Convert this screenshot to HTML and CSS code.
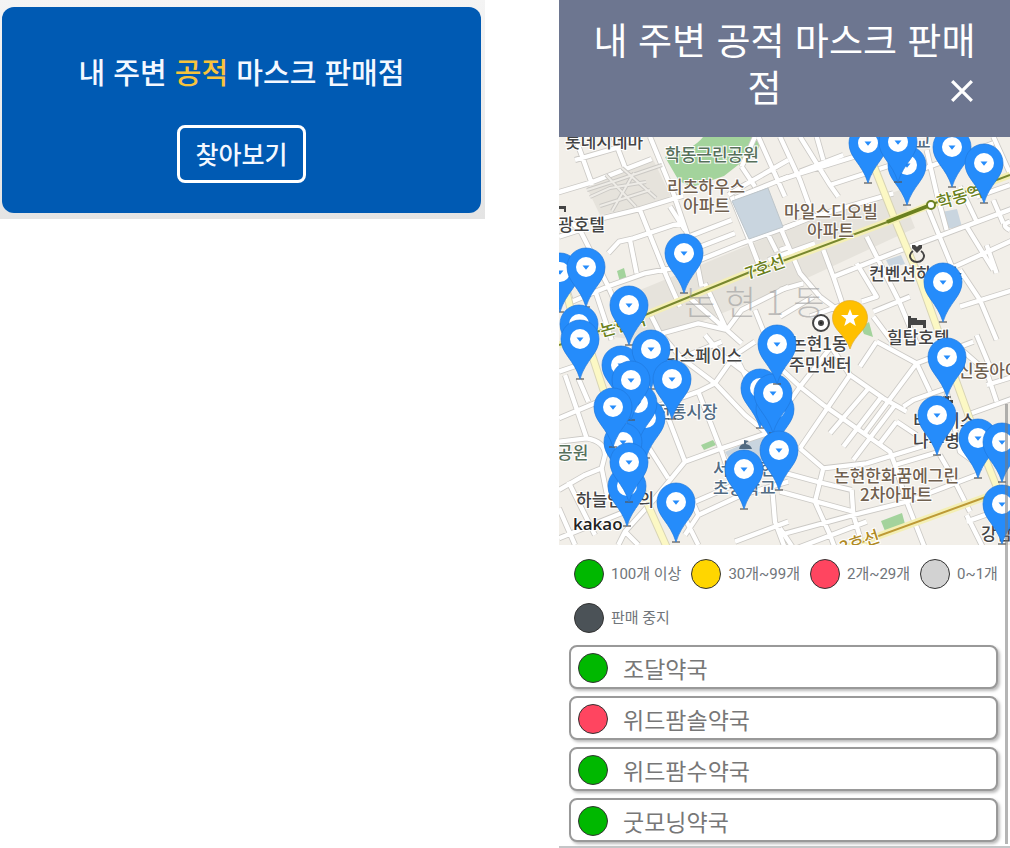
FILE: index.html
```html
<!DOCTYPE html>
<html lang="ko">
<head>
<meta charset="utf-8">
<title>내 주변 공적 마스크 판매점</title>
<link rel="stylesheet" href="styles.css">
</head>
<body>
<main class="page">
  <section class="banner">
    <div class="banner-card">
      <h2 class="banner-title">내 주변 <em class="accent">공적</em> 마스크 판매점</h2>
      <button class="find" type="button">찾아보기</button>
    </div>
  </section>

  <section class="panel">
    <header class="panel-head">
      <h1 class="panel-title">내 주변 공적 마스크 판매점<button class="close" type="button" aria-label="닫기"><svg class="close-icon" viewBox="0 0 22 22"><path d="M2 2L20 20M20 2L2 20"/></svg></button></h1>
    </header>

    <svg class="map" viewBox="559 137 451 408" preserveAspectRatio="xMidYMid slice" role="img" aria-label="논현1동 지도">
      <defs>
        <g id="roads">
          <g transform="translate(555 130) scale(.3333)">
            <path d="M60 20L112 165M175 20L210 112M0 190L110 157L290 87M285 20L355 190L425 395L440 470M60 90L180 55L240 20M100 275L255 237L385 197M160 370L192 335L235 325L355 285L390 280M40 270L75 300L160 470L225 620M255 240L295 340L335 440L375 530M50 515L170 465L270 430L390 408L560 340L720 282M225 330L245 430M345 230L390 300M400 320L530 270M410 360L540 310M530 200L585 335L610 400M540 205L700 140M520 195L560 170L700 90M560 110L600 20M560 110L600 170M610 20L690 200M640 315L665 365M640 390L780 340M515 600L400 500M515 600L560 540L700 470M515 600L560 640M250 630L430 580L515 600M290 560L330 640M450 460L515 600M600 540L640 640M120 480L170 630M12 320L75 300M12 400L50 520"/>
          </g>
          <g transform="translate(780 130) scale(.3333)">
            <path d="M0 150L60 130L240 75M0 20L60 150L100 260M60 20L150 165L175 200M150 165L335 105M60 125L190 75M110 20L130 90M0 300L100 260L340 190M0 290L60 430L120 500L200 560M0 360L30 350M130 360L160 440L190 530M260 320L360 520L410 640M160 440L350 365L460 325L700 235M0 480L70 460M440 60L470 190L500 300M440 225L520 420M560 290L640 420M480 430L700 330M620 345L650 430M540 530L700 480M600 510L650 630M540 420L600 510M0 560L100 500M90 560L200 520M230 400L290 500L245 515M280 545L390 500M280 560L340 640M540 170L590 275M590 200L690 165M640 20L690 130M420 120L640 40M640 210L670 280M690 275Q660 285 690 300"/>
          </g>
          <g transform="translate(555 335) scale(.3333)">
            <path d="M12 110L70 90M12 250L130 200M30 120L95 310M70 130L100 200M12 320L95 310Q150 320 150 360L140 400L90 420L12 465M40 440L120 600M12 520L60 630M140 400L160 500M320 0L380 70L480 145L540 60L600 20M290 220L430 170L480 145L570 240L630 290M430 170L500 350L540 470M340 250L390 380M390 380L500 340L680 280M390 380L300 490L210 590L190 630M270 320L340 430M390 600L430 540L560 480L700 440M540 620L700 560M380 530L430 630M420 500L560 440M650 440L660 560L690 640M12 610L210 530M450 0L500 60L580 120M540 60L600 180M400 60L500 20M210 590L250 630M430 540L400 470"/>
          </g>
          <g transform="translate(780 335) scale(.3333)">
            <path d="M-20 80L60 155L130 210L330 350L345 390M0 240L60 155L150 40M150 30L210 120L310 190L380 230M210 120L60 340M270 155L150 295M305 185L190 335M345 210L220 375M410 85L250 300M290 20L410 85L450 170M410 85L580 20M370 215L400 195L500 160M350 260L410 300M350 260L300 325M240 95L290 20M60 340L130 400L260 385L440 330M130 400L105 500L150 600L165 640M0 410L110 440L215 465M0 470L110 500L220 530M0 600L220 540L380 500L590 420M215 465L220 540L250 640M345 390L480 350M480 360L520 430L570 530M560 240L700 190M540 40L620 110L650 200M620 150L700 125M590 0L640 120M380 500L435 640M345 390L380 500M560 540L610 640M0 580L40 640M50 640L260 560M560 560L700 510M500 170L540 350L610 400"/>
          </g>
        </g>
        <g id="pin">
          <path d="M-4 40H4" stroke="#555" stroke-opacity=".6" stroke-width="2"/>
          <path d="M-19 0A19 19 0 0 1 19 0C19 15 6 20 0 40C-6 20-19 15-19 0Z" fill="#258cfb" stroke="#1f78dd" stroke-width=".7"/>
          <circle r="10" fill="#fff"/>
          <path d="M-3.5-1.5H3.5L0 2.8Z" fill="#258cfb"/>
        </g>
      </defs>

      <path d="M559 137H1010V545H559Z" fill="#f2efe9"/>
      <g fill="#e6e3dc">
        <path d="M587 188L652 157L672 199L600 215Z"/>
        <path d="M640 290L780 232L900 190L915 228L790 286L650 342L600 335Z"/>
      </g>
      <g fill="#a3d39c">
        <path d="M665 157Q693 150 703 137H754Q765 147 752 154L724 176L692 187L679 181Z"/>
        <path d="M617 271L624 268L627 280L620 282Z"/>
        <path d="M701 445L713 440L716 445L704 450Z"/>
        <path d="M881 521L902 513L905 524L885 531Z"/>
        <path d="M861 327L869 322L873 337L864 334Z"/>
      </g>
      <g fill="#c9d5df">
        <path d="M725 452L770 432L779 455L735 470Z"/>
        <path d="M942 212L957 209L962 227L944 229Z"/>
        <path d="M886 260L901 255L905 264L890 268Z"/>
      </g>
      <g fill="none" stroke-linejoin="round">
        <use href="#roads" stroke="#cbc9c5" stroke-width="18"/>
        <use href="#roads" stroke="#fff" stroke-width="13"/>
        <g stroke="#cbc9c5" stroke-width="4">
          <path id="lanes" d="M587 190L618 180L662 165M600 206L650 190M606 175L636 207M622 168L656 198M612 211L634 173M590 197L610 188L646 182"/>
        </g>
        <use href="#lanes" stroke="#eeece7" stroke-width="2"/>
        <path d="M868 151L895 220L920 280L945 350L972 425L1002 500M566 290L572 315L592 355L610 410L648 505L668 550" stroke="#d8d4b5" stroke-width="8"/>
        <path d="M868 151L895 220L920 280L945 350L972 425L1002 500M566 290L572 315L592 355L610 410L648 505L668 550" stroke="#fcf8c4" stroke-width="6"/>
        <path d="M559 345L645 315L750 272L780 262L890 221L930 205L1010 175M840 550L983 498L1010 488" stroke="#f4efb4" stroke-width="7"/>
        <path d="M559 345L645 315L750 272L780 262L890 221L930 205L1010 175" stroke="#78882f" stroke-width="2"/>
        <path d="M887 222L928 206" stroke="#6b8120" stroke-width="4"/>
        <path d="M840 550L983 498L1010 488" stroke="#bd9a36" stroke-width="2"/>
        <circle cx="931" cy="205" r="4" fill="#fff" stroke="#6b8120" stroke-width="2"/>
      </g>
      <path d="M732 201L768 188L783 227L749 239Z" fill="#c9d5df" stroke="#bdc5ca"/>

      <text class="district" x="684" y="315">논 현 1 동</text>

      <g class="place">
        <text x="565" y="148">롯데시네마</text>
        <text x="558" y="231">광호텔</text>
        <text x="869" y="280">컨벤션하우스</text>
        <text x="887" y="344">힐탑호텔</text>
        <text x="664" y="362">디스페이스</text>
        <text x="791" y="350">논현1동</text>
        <text x="789" y="371">주민센터</text>
        <text x="913" y="427">비너이스</text>
        <text x="913" y="447">나누병</text>
        <text x="576" y="506">하늘안과의</text>
        <text x="981" y="540">강남</text>
      </g>
      <g class="place brown">
        <text x="667" y="193">리츠하우스</text>
        <text x="683" y="212">아파트</text>
        <text x="784" y="218">마일스디오빌</text>
        <text x="807" y="237">아파트</text>
        <text x="958" y="377">신동아아</text>
        <text x="834" y="482">논현한화꿈에그린</text>
        <text x="860" y="501">2차아파트</text>
      </g>
      <g class="place green">
        <text x="665" y="161">학동근린공원</text>
        <text x="557" y="459">공원</text>
      </g>
      <g class="place slate">
        <text x="655" y="418">전통시장</text>
        <text x="713" y="475">서울논현</text>
        <text x="713" y="494">초등학교</text>
        <text x="915" y="148">교</text>
      </g>
      <g class="place line">
        <text transform="translate(748 280) rotate(-20)">7호선</text>
        <text transform="translate(939 209) rotate(-16)">학동역</text>
        <text transform="translate(602 337) rotate(-16)">논현역</text>
        <text class="gold" transform="translate(842 554) rotate(-18)">3호선</text>
      </g>

      <g fill="none" stroke="#444">
        <circle cx="821" cy="323" r="8" stroke-width="2" fill="#fff"/>
        <circle cx="821" cy="323" r="2" fill="#222" stroke-width="2"/>
        <path d="M913 251A7 6 0 1 0 921 251" stroke-width="2"/>
      </g>
      <g fill="#444">
        <path d="M917 253L912 248V245L915 245L917 247L919 245L922 245V248Z"/>
        <path d="M908 316H911V318H917V320H926V328H923V325H911V328H908Z"/>
        <path d="M559 206H566V212H564V209H559Z"/>
        <path d="M739 449Q740 444 744 444V440L749 441L746 443V444Q751 445 752 449Z" fill="#526b82"/>
        <path d="M941 400H945V396H949V400H953V403H941Z"/>
      </g>

      <use href="#pin" x="868" y="143"/>
      <use href="#pin" x="907" y="165"/>
      <use href="#pin" x="898" y="142"/>
      <use href="#pin" x="952" y="147"/>
      <use href="#pin" x="984" y="163"/>
      <use href="#pin" x="684" y="253"/>
      <use href="#pin" x="560" y="272"/>
      <use href="#pin" x="586" y="267"/>
      <use href="#pin" x="943" y="282"/>
      <use href="#pin" x="629" y="305"/>
      <use href="#pin" x="579" y="324"/>
      <use href="#pin" x="580" y="339"/>
      <use href="#pin" x="621" y="365"/>
      <use href="#pin" x="651" y="349"/>
      <use href="#pin" x="646" y="418"/>
      <use href="#pin" x="638" y="403"/>
      <use href="#pin" x="631" y="380"/>
      <use href="#pin" x="672" y="379"/>
      <use href="#pin" x="623" y="442"/>
      <use href="#pin" x="613" y="407"/>
      <use href="#pin" x="627" y="486"/>
      <use href="#pin" x="629" y="462"/>
      <use href="#pin" x="676" y="502"/>
      <use href="#pin" x="744" y="469"/>
      <use href="#pin" x="760" y="388"/>
      <use href="#pin" x="775" y="409"/>
      <use href="#pin" x="773" y="393"/>
      <use href="#pin" x="777" y="344"/>
      <use href="#pin" x="779" y="450"/>
      <use href="#pin" x="947" y="357"/>
      <use href="#pin" x="937" y="415"/>
      <use href="#pin" x="978" y="438"/>
      <use href="#pin" x="1002" y="442"/>
      <use href="#pin" x="1002" y="504"/>
      <g transform="translate(850 318)">
        <path d="M-17.5 0A17.5 17.5 0 0 1 17.5 0C17.5 12 5 16 0 31C-5 16-17.5 12-17.5 0Z" fill="#ffc000" stroke="#e0a92c" stroke-width=".7"/>
        <path d="M0-9L2.4-3H9L3.8 1.3L5.8 8L0 4.2L-5.8 8L-3.8 1.3L-9-3H-2.4Z" fill="#fff"/>
      </g>
      <text class="kakao" x="573" y="530">kakao</text>
    </svg>

    <ul class="legend">
      <li class="key"><span class="dot plenty"></span>100개 이상</li>
      <li class="key"><span class="dot some"></span>30개~99개</li>
      <li class="key"><span class="dot few"></span>2개~29개</li>
      <li class="key"><span class="dot none"></span>0~1개</li>
      <li class="key"><span class="dot closed"></span>판매 중지</li>
    </ul>

    <ul class="stores">
      <li><button class="store" type="button"><span class="dot plenty"></span>조달약국</button></li>
      <li><button class="store" type="button"><span class="dot few"></span>위드팜솔약국</button></li>
      <li><button class="store" type="button"><span class="dot plenty"></span>위드팜수약국</button></li>
      <li><button class="store" type="button"><span class="dot plenty"></span>굿모닝약국</button></li>
    </ul>
    <span class="scrollbar"></span>
  </section>
</main>
</body>
</html>
```
FILE: styles.css
```css
* {
  box-sizing: border-box;
}

body {
  margin: 0;
  background: #fff;
  font-family: "Noto Sans CJK KR", sans-serif;
}

button {
  font-family: inherit;
  cursor: pointer;
}

.page {
  display: grid;
  grid-template-columns: 485fr 451fr;
  column-gap: 74px;
  align-items: start;
}

.banner {
  padding: 7px 4px 6px 2px;
  background: linear-gradient(#f4f4f4, #e4e4e4);
}

.banner-card {
  display: flex;
  flex-direction: column;
  align-items: center;
  gap: 32px;
  padding: 42px 16px 30px;
  border-radius: 12px;
  background: #005ab3;
  color: #f4f8ff;
}

.banner-title {
  margin: 0;
  font-size: 29px;
  font-weight: 500;
  line-height: 44px;
}

.accent {
  color: #f7c33c;
  font-style: normal;
}

.find {
  padding: 7px 15px 9px;
  border: 3px solid #fff;
  border-radius: 8px;
  background: transparent;
  color: #f4f8ff;
  font-size: 25px;
  font-weight: 500;
  line-height: 36px;
}

.panel {
  position: relative;
  border-bottom: 2px solid #c4c6c8;
}

.panel-head {
  padding: 16px 28px 27px;
  background: #6d7690;
}

.panel-title {
  margin: 0;
  color: #fff;
  font-size: 37px;
  font-weight: 400;
  line-height: 47px;
  text-align: center;
}

.close {
  float: right;
  display: flex;
  align-items: center;
  justify-content: center;
  width: 40px;
  height: 56px;
  padding: 0;
  border: 0;
  background: transparent;
}

.close-icon {
  width: 24px;
  height: 24px;
  fill: none;
  stroke: #fff;
  stroke-width: 3;
}

.map {
  display: block;
  width: 100%;
  aspect-ratio: 451 / 408;
}

.place {
  font-size: 17px;
  font-weight: 500;
  fill: #444;
  stroke: #fff;
  stroke-width: 2px;
  paint-order: stroke;
}

.brown { fill: #70604f; }
.green { fill: #56705a; }
.slate { fill: #526b82; }
.line { fill: #6b8120; }
.gold { fill: #b08a25; }

.district {
  font-size: 34px;
  font-weight: 300;
  fill: #999;
  fill-opacity: 0.6;
}

.kakao {
  font-family: "Open Sans", sans-serif;
  font-size: 17px;
  font-weight: 600;
  fill: #222;
  stroke: #fff;
  stroke-width: 2px;
  paint-order: stroke;
}

.legend,
.stores {
  margin: 0;
  padding: 0;
  list-style: none;
}

.legend {
  display: flex;
  flex-wrap: wrap;
  gap: 14px 10px;
  padding: 14px 8px 12px 15px;
}

.key {
  display: flex;
  align-items: center;
  gap: 7px;
  color: #70757a;
  font-family: Roboto, "Noto Sans CJK KR", sans-serif;
  font-size: 15px;
  font-weight: 400;
  line-height: 30px;
  white-space: nowrap;
}

.dot {
  flex: none;
  width: 30px;
  height: 30px;
  border: 1px solid #333;
  border-radius: 50%;
}

.plenty { background: #00b800; }
.some { background: #ffd600; }
.few { background: #ff4560; }
.none { background: #d2d2d2; }
.closed { background: #4b5257; }

.stores {
  display: flex;
  flex-direction: column;
  gap: 7px;
  padding: 0 12px 4px 10px;
}

.store {
  display: flex;
  align-items: center;
  gap: 15px;
  width: 100%;
  height: 44px;
  padding: 2px 7px 0;
  border: 2px solid #999;
  border-radius: 8px;
  background: #fff;
  box-shadow: 2px 2px 3px #bbb;
  color: #777;
  font-size: 23px;
  font-weight: 400;
  line-height: 28px;
}

.scrollbar {
  position: absolute;
  right: 2px;
  bottom: 2px;
  width: 3px;
  height: 52%;
  background: rgba(120, 120, 120, 0.55);
}
```
